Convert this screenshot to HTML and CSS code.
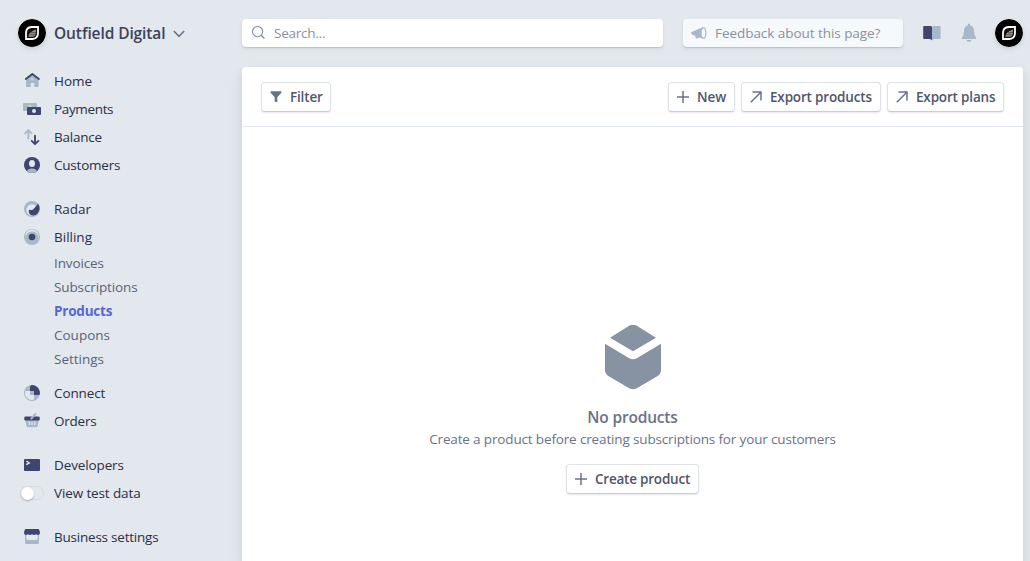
FILE: index.html
```html
<!DOCTYPE html>
<html lang="en">
<head>
<meta charset="utf-8">
<title>Products</title>
<link rel="stylesheet" href="styles.css">
</head>
<body>
<svg class="defs" width="0" height="0">
  <symbol id="logo" viewBox="0 0 28 28">
    <circle cx="14" cy="14" r="14" fill="#000"/>
    <path d="M8 20V13.8Q8.2 8.3 13.6 8H20V14.2Q19.8 19.7 14.4 20Z" fill="#111" stroke="#fff" stroke-width="1.8"/>
    <path d="M10.3 17.7Q10.8 13 17.8 10.5V14.2Q17.6 17.5 14.4 17.7Z" fill="#999"/>
    <path d="M13 13.7H18M11.5 15.8H18" stroke="#333" stroke-width=".7"/>
  </symbol>
  <symbol id="plus" viewBox="0 0 12 12"><path d="M6 0V12M0 6H12" stroke="#697386" stroke-width="1.5"/></symbol>
  <symbol id="export" viewBox="0 0 12 12"><path d="M.8 11.2L10.8 1.2M2.5 1H11V9.5" fill="none" stroke="#697386" stroke-width="1.5"/></symbol>
</svg>
<div class="app">
  <aside class="sidebar">
    <div class="account">
      <svg class="avatar"><use href="#logo"/></svg>
      <span class="account-name">Outfield Digital</span>
      <svg class="chevron" viewBox="0 0 12 8"><path d="M.8 1L6 6.3L11.2 1" fill="none" stroke="#697386" stroke-width="1.6"/></svg>
    </div>
    <nav>
      <div class="group">
        <a class="item"><svg class="icon" viewBox="0 0 24 24"><path d="M6 10L12.3 5L18.6 10V17.2Q18.6 18 17.8 18H14.3V14H10.7V18H6.8Q6 18 6 17.2Z" fill="#a8b8c8"/><path d="M5.8 9.9L12.3 4.9L18.9 9.9" fill="none" stroke="#3f456f" stroke-width="1.9" stroke-linecap="round" stroke-linejoin="round"/><circle cx="12.3" cy="10.3" r="1.2" fill="#c9d3de"/></svg><span>Home</span></a>
        <a class="item"><svg class="icon" viewBox="0 0 24 24"><rect x="3" y="6" width="14" height="8" rx="1" fill="#a8b8c8"/><circle cx="10" cy="10" r="2" fill="#c9d3de"/><rect x="7" y="10" width="14" height="8" rx="1" fill="#3f456f"/><circle cx="14" cy="14" r="2" fill="#e3e8ee"/></svg><span class="tight-3">Payments</span></a>
        <a class="item"><svg class="icon" viewBox="0 0 24 24" fill="none" stroke-width="1.9" stroke-linecap="round" stroke-linejoin="round"><path d="M8.4 13.6V5.3M5.1 8.4L8.4 5.1L11.7 8.4" stroke="#a8b8c8"/><path d="M15 10.7V19M11.7 15.9L15 19.1L18.4 15.9" stroke="#3f456f"/></svg><span class="tight-2">Balance</span></a>
        <a class="item"><svg class="icon" viewBox="0 0 24 24"><circle cx="12" cy="12" r="8" fill="#3f456f"/><path d="M7 18.2Q8.2 15.5 12 15.5T17 18.2Q15 20 12 20T7 18.2Z" fill="#a8b8c8"/><ellipse cx="12" cy="10.5" rx="3" ry="3.5" fill="#e3e8ee"/></svg><span class="tight-2">Customers</span></a>
      </div>
      <div class="group">
        <a class="item"><svg class="icon" viewBox="0 0 24 24"><circle cx="12" cy="12" r="8" fill="#a8b8c8"/><circle cx="12" cy="13" r="5.7" fill="#e3e8ee"/><path d="M18.1 6.8A8 8 0 0 1 18.2 15.6Q16.5 18.5 13 18.5Q9 18.3 8.7 14.2Q9 12.2 10.7 13Q12.5 13.4 14.2 11.2Z" fill="#3f456f"/></svg><span>Radar</span></a>
        <a class="item"><svg class="icon" viewBox="0 0 24 24"><circle cx="12" cy="12" r="8" fill="#a8b8c8"/><path d="M5.1 10.4A7 7 0 1 1 17.2 16.2A6 6 0 0 0 12 6.6Q8 6.6 6.3 10.2Z" fill="#e3e8ee"/><circle cx="12" cy="12" r="3.3" fill="#3f456f"/></svg><span>Billing</span></a>
        <div class="subnav">
          <a class="tight-1">Invoices</a>
          <a class="tight-1">Subscriptions</a>
          <a class="tight-2 active">Products</a>
          <a>Coupons</a>
          <a>Settings</a>
        </div>
        <a class="item"><svg class="icon" viewBox="0 0 24 24"><circle cx="12" cy="12" r="8" fill="#a8b8c8"/><path d="M10 5.5Q11 4 13 4.1A8 8 0 0 1 19.6 14H14V10H10Z" fill="#3f456f"/><path d="M6 10H10V14H14V18Q14 19 12 19A7 7 0 0 1 5 12Q5 10 6 10Z" fill="#e3e8ee"/></svg><span class="tight-1">Connect</span></a>
        <a class="item"><svg class="icon" viewBox="0 0 24 24"><path d="M5.3 11H18.7L17.7 17Q17.4 18.3 16.2 18.3H7.8Q6.6 18.3 6.4 17Z" fill="#a8b8c8"/><path d="M9.1 12.4L9.4 16M12 12.4V16M14.9 12.4L14.6 16" stroke="#e3e8ee" stroke-width="1.2"/><rect x="4.3" y="7.5" width="15.4" height="4" rx="1.3" fill="#3f456f"/><path d="M11.3 9.6L15.5 4.9" stroke="#a8b8c8" stroke-width="2" stroke-linecap="round"/></svg><span class="tight-2">Orders</span></a>
      </div>
      <div class="group">
        <a class="item"><svg class="icon" viewBox="0 0 24 24"><rect x="4" y="6" width="16" height="12" rx="1" fill="#3f456f"/><path d="M6.3 8L9.3 9.9L6.3 11.7" fill="none" stroke="#dfe5ec" stroke-width="1.4"/></svg><span class="tight-1">Developers</span></a>
        <a class="item"><span class="toggle"><span class="knob"></span></span><span class="tight-1">View test data</span></a>
      </div>
      <div class="group">
        <a class="item"><svg class="icon" viewBox="0 0 24 24"><path d="M5 13H19V17.5Q19 19 17.5 19H6.5Q5 19 5 17.5Z" fill="#a8b8c8"/><path d="M5 8H6.5V14H5ZM17.5 8H19V14H17.5Z" fill="#a8b8c8"/><path d="M6.5 9H17.5V14Q17.5 15 16.5 15H7.5Q6.5 15 6.5 14Z" fill="#e3e8ee"/><path d="M6 4H18Q19 4 19.4 5.2L20 7.5Q20 10 18 10Q16.8 10 16 9.2Q14 10.8 12 9.2Q10 10.8 8 9.2Q7.2 10 6 10Q4 10 4 7.5L4.6 5.2Q5 4 6 4Z" fill="#3f456f"/></svg><span class="tight-2">Business settings</span></a>
      </div>
    </nav>
  </aside>
  <main class="main">
    <header class="topbar">
      <div class="search"><svg width="14" height="14" viewBox="0 0 14 14" fill="none" stroke="#8792a2"><circle cx="5.6" cy="5.6" r="5.1" stroke-width="1.1"/><path d="M9.2 9.2L12.4 12.4" stroke-width="1.4"/></svg><span class="tight-2">Search...</span></div>
      <div class="feedback"><svg width="16" height="12" viewBox="0 0 16 12"><path d="M.5 5.1L12 .3V11.6L8.2 10.3Q7.2 12 5.5 11.3Q4.1 10.8 4.2 9L.5 7.3Q0 6.2.5 5.1Z" fill="#a8b8c8"/><ellipse cx="12.4" cy="6" rx="2.4" ry="5.2" fill="#f6f9fc" stroke="#a8b8c8" stroke-width="1.2"/></svg><span>Feedback about this page?</span></div>
      <svg class="book" width="18" height="16" viewBox="0 0 18 16"><path d="M1 1H7.5Q9 1 9 2.2V15.5Q8.3 14 6.8 14H1Q.2 14 .2 13.2V1.8Q.2 1 1 1Z" fill="#3f456f"/><path d="M17 1H10.5Q9 1 9 2.2V15.5Q9.7 14 11.2 14H17Q17.6 14 17.6 13.2V1.8Q17.6 1 17 1Z" fill="#a8b8c8"/></svg>
      <svg class="bell" width="16" height="20" viewBox="0 0 16 20"><path d="M7 .9Q8 0 9 .9V2.3Q13 3.4 13 8Q13.1 12.4 14.8 14.1Q16 15.9 14.5 16H1.5Q0 15.9 1.2 14.1Q2.9 12.4 3 8Q3 3.4 7 2.3ZM5.6 17H10.4Q10.2 19 8 19T5.6 17Z" fill="#a8b8c8"/></svg>
      <svg class="avatar"><use href="#logo"/></svg>
    </header>
    <section class="panel">
      <div class="toolbar">
        <button class="btn filter"><svg width="12" height="12" viewBox="0 0 12 12"><path d="M.6.3H11.4V1.8L7.3 6.3V11.5L4.7 10.4V6.3L.6 1.8Z" fill="#697386"/></svg><span>Filter</span></button>
        <button class="btn new"><svg width="12" height="12"><use href="#plus"/></svg><span>New</span></button>
        <button class="btn exp-products"><svg width="12" height="12"><use href="#export"/></svg><span>Export products</span></button>
        <button class="btn exp-plans"><svg width="12" height="12"><use href="#export"/></svg><span>Export plans</span></button>
      </div>
      <div class="empty">
        <svg class="box" width="56" height="65" viewBox="0 0 56 65" fill="#8792a2"><path d="M5 12.7L24.6.6Q28 -1 31.4.6L51 12.7L28 26.3Z"/><path d="M0 18.8L24.2 33.3Q28 35.3 31.8 33.3L56 18.8V45Q56 48.9 52.7 51L31.4 63.5Q28 65.1 24.6 63.5L3.3 51Q0 48.9 0 45Z"/></svg>
        <h1>No products</h1>
        <p>Create a product before creating subscriptions for your customers</p>
        <button class="btn create"><svg width="12" height="12"><use href="#plus"/></svg><span>Create product</span></button>
      </div>
    </section>
  </main>
</div>
</body>
</html>
```
FILE: styles.css
```css
* { box-sizing: border-box; }
body {
  margin: 0;
  height: 561px;
  overflow: hidden;
  background: #e3e8ee;
  color: #2a2f45;
  font: 13.5px/20px "Open Sans", "Noto Sans", sans-serif;
}
svg { display: block; flex: none; }
.defs { display: none; }
span, .subnav a { white-space: nowrap; }
.tight-1 { letter-spacing: -.12px; }
.tight-2 { letter-spacing: -.22px; }
.tight-3 { letter-spacing: -.35px; }
.app { display: flex; height: 100%; }
.sidebar { width: 242px; flex: none; }
.account { display: flex; align-items: center; height: 28px; margin: 19px 0 20px 18px; }
.avatar { width: 28px; height: 28px; border-radius: 50%; box-shadow: 0 2px 4px rgba(60, 66, 87, .16); }
.account-name { margin-left: 8px; width: 119px; font-size: 15.5px; font-weight: 600; letter-spacing: -.1px; color: #3c4257; }
.chevron { width: 12px; height: 8px; margin-top: 2px; }
.group { margin-bottom: 16px; }
.item { display: flex; align-items: center; height: 28px; padding-left: 20px; gap: 10px; }
.icon { width: 24px; height: 24px; }
.subnav { display: grid; grid-auto-rows: 24px; padding: 0 0 8px 54px; line-height: 24px; color: #5b6278; }
.subnav .active { color: #5469d4; font-weight: 700; }
.toggle { width: 24px; height: 14px; border: 1px solid #d5dae2; border-radius: 7px; display: flex; align-items: center; }
.knob { width: 13px; height: 13px; flex: none; border-radius: 50%; background: #fff; box-shadow: 0 1px 2px rgba(60, 66, 87, .35); }

.main { width: 781px; }
.topbar { display: flex; align-items: center; height: 28px; margin: 19px 0 20px; }
.search, .feedback { display: flex; align-items: center; height: 28px; border-radius: 4px; box-shadow: 0 1px 1px rgba(60, 66, 87, .18), 0 2px 4px rgba(60, 66, 87, .08); color: #8792a2; }
.search { width: 421px; padding-left: 10px; gap: 8px; background: #fff; }
.feedback { width: 220px; margin-left: 20px; padding-left: 8px; gap: 8px; background: #f6f9fc; letter-spacing: -.05px; }
.book { margin: 0 20px 0 20px; }
.bell { margin-right: auto; }
.panel { height: 494px; background: #fff; border-radius: 4px 4px 0 0; box-shadow: 0 7px 14px rgba(60, 66, 87, .1), 0 3px 6px rgba(60, 66, 87, .06); }
.toolbar { display: flex; gap: 6px; height: 60px; padding: 15px 19px 0; border-bottom: 1px solid #e3e8ee; }
.btn { display: flex; align-items: center; height: 30px; padding: 0 8px; gap: 8px; border: 1px solid #dfe2e6; border-bottom-color: #c9ccd1; border-radius: 4px; background: #fff; box-shadow: 0 1px 2px rgba(60, 66, 87, .12); color: #4f566b; font: 600 13.5px/20px "Open Sans", "Noto Sans", sans-serif; letter-spacing: -.17px; }
.filter { width: 70px; margin-right: auto; }
.new { width: 67px; letter-spacing: 0; }
.exp-products { width: 140px; }
.exp-plans { width: 117px; }
.empty { display: flex; flex-direction: column; align-items: center; padding-top: 197px; color: #697386; }
.box { margin-top: 1px; }
h1 { margin: 16px 0 0; font-size: 15.5px; line-height: 22px; font-weight: 600; letter-spacing: -.17px; }
p { margin: 1px 0 0; white-space: nowrap; letter-spacing: -.15px; }
.create { width: 133px; margin-top: 15px; letter-spacing: -.22px; }
```
